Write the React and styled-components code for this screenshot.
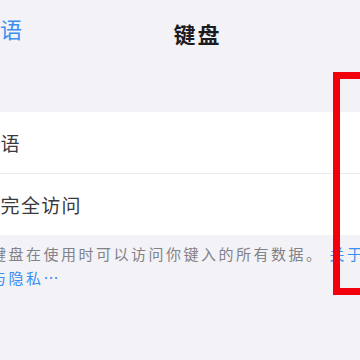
import styled, { createGlobalStyle } from 'styled-components';

const GlobalStyle = createGlobalStyle`
    html, body {
        margin: 0;
        padding: 0;
        background: #f2f2f7;
    }
    body {
        font-family: "Noto Sans CJK SC", "Noto Sans", sans-serif;
    }
`

export default function App() {
    return (
        <>
            <GlobalStyle />
            <Screen>
                <Canvas>
                    <NavBar>
                        <BackButton>多语</BackButton>
                        <Title>键盘</Title>
                        <span />
                    </NavBar>

                    <Group>
                        <Row>
                            <Label>多国语</Label>
                        </Row>
                        <Row>
                            <Label>允许完全访问</Label>
                        </Row>
                    </Group>

                    <Footer>
                        键盘在使用时可以访问你键入的所有数据。
                        <Link>关于第三方键盘<br />与隐私…</Link>
                    </Footer>
                </Canvas>

                <Highlight />
            </Screen>
        </>
    )
}

const Screen = styled.div`
    position: relative;
    width: 360px;
    height: 360px;
    overflow: hidden;
    background: #f2f2f7;
`

const Canvas = styled.div`
    width: 475px;
    margin-left: -40px;
`

const NavBar = styled.header`
    display: grid;
    grid-template-columns: 1fr auto 1fr;
    align-items: start;
    height: 60px;
`

const BackButton = styled.div`
    justify-self: start;
    padding: 17px 0 0 18px;
    font-size: 22px;
    line-height: 22px;
    color: #3a8ff0;
`

const Title = styled.h1`
    margin: 0;
    padding-top: 22px;
    font-size: 22px;
    line-height: 22px;
    font-weight: 700;
    letter-spacing: 2px;
    color: #1c1c1e;
`

const Group = styled.section`
    margin-top: 52px;
    background: #ffffff;
`

const Row = styled.div`
    display: flex;
    align-items: center;
    height: 61px;

    & + & {
        border-top: 1px solid #e9e9ee;
    }
`

const Label = styled.span`
    font-size: 19px;
    letter-spacing: 1.3px;
    color: #3a3a3c;
    white-space: nowrap;
`

const Footer = styled.p`
    margin: 0;
    padding: 7px 0 0 31px;
    font-size: 15px;
    line-height: 24px;
    letter-spacing: 2.5px;
    color: #828288;
    white-space: nowrap;
`

const Link = styled.span`
    margin-left: 6px;
    color: #3a8ff0;
`

const Highlight = styled.div`
    position: absolute;
    left: 333px;
    top: 72px;
    width: 140px;
    height: 223px;
    box-sizing: border-box;
    border: 7px solid #f2000c;
`
